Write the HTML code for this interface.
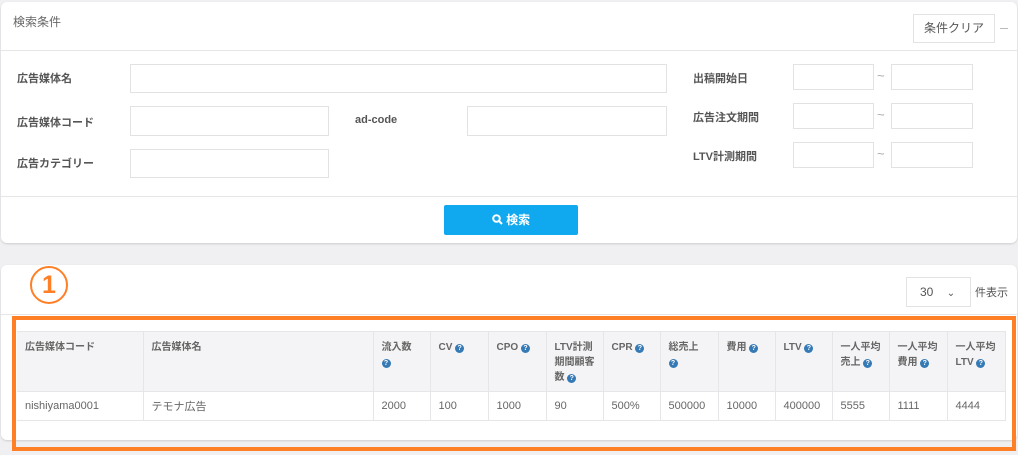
<!DOCTYPE html>
<html><head><meta charset="utf-8"><style>
*{box-sizing:border-box;margin:0;padding:0}
body{width:1018px;height:455px;background:#f0f0f2;font-family:"Liberation Sans","Noto Sans CJK JP",sans-serif;color:#555;position:relative;overflow:hidden;font-size:12px}
.a{position:absolute}
.panel{background:#fff;border-radius:6px;box-shadow:0 1px 2px rgba(0,0,0,.15)}
.inp{position:absolute;border:1px solid #e2e2e2;background:#fff}
.lbl{position:absolute;font-weight:bold;font-size:11px;color:#555}
.t{position:absolute;color:#aaa;font-size:13px}
.q{display:inline-block;width:9px;height:9px;border-radius:50%;background:#3579b5;color:#fff;font-size:7px;line-height:9px;text-align:center;font-weight:bold;vertical-align:0px}
table{border-collapse:collapse;position:absolute;left:17px;top:331px;width:988px;table-layout:fixed}
th{background:#f4f4f6;font-size:10px;font-weight:bold;text-align:left;vertical-align:top;padding:8px 8px 0;height:60px;line-height:15px;border-right:1px solid #e6e6e8;border-top:1px solid #e6e6e8;color:#666}
td{font-size:11px;padding:0 8px;height:29px;border:1px solid #e6e6e8;border-left:none;color:#666}
</style></head><body>
<div class="a panel" style="left:1px;top:2px;width:1016px;height:241px"></div>
<div class="a" style="left:13px;top:13px;font-size:12px;color:#666">検索条件</div>
<div class="a" style="left:913px;top:14px;width:82px;height:29px;border:1px solid #e2e2e2;font-size:12px;line-height:27px;text-align:center;color:#555">条件クリア</div>
<div class="a" style="left:1000px;top:28px;width:8px;height:1px;background:#bbb"></div>
<div class="a" style="left:1px;top:50px;width:1016px;height:1px;background:#e6e6e6"></div>
<div class="lbl" style="left:17px;top:70px">広告媒体名</div>
<div class="inp" style="left:130px;top:64px;width:537px;height:29px"></div>
<div class="lbl" style="left:17px;top:114px">広告媒体コード</div>
<div class="inp" style="left:130px;top:106px;width:199px;height:30px"></div>
<div class="lbl" style="left:355px;top:114px">ad-code</div>
<div class="inp" style="left:467px;top:106px;width:200px;height:30px"></div>
<div class="lbl" style="left:17px;top:155px">広告カテゴリー</div>
<div class="inp" style="left:130px;top:149px;width:199px;height:29px"></div>
<div class="lbl" style="left:693px;top:70px">出稿開始日</div>
<div class="lbl" style="left:693px;top:109px">広告注文期間</div>
<div class="lbl" style="left:693px;top:148px">LTV計測期間</div>
<div class="inp" style="left:793px;top:64px;width:81px;height:26px"></div><div class="t" style="left:877px;top:68px">~</div><div class="inp" style="left:891px;top:64px;width:82px;height:26px"></div>
<div class="inp" style="left:793px;top:103px;width:81px;height:26px"></div><div class="t" style="left:877px;top:107px">~</div><div class="inp" style="left:891px;top:103px;width:82px;height:26px"></div>
<div class="inp" style="left:793px;top:142px;width:81px;height:26px"></div><div class="t" style="left:877px;top:146px">~</div><div class="inp" style="left:891px;top:142px;width:82px;height:26px"></div>
<div class="a" style="left:1px;top:196px;width:1016px;height:1px;background:#e6e6e6"></div>
<div class="a" style="left:444px;top:205px;width:134px;height:30px;background:#10a8ee;border-radius:2px;color:#fff;font-size:12px;line-height:30px;text-align:center;font-weight:bold"><svg width="11" height="11" viewBox="0 0 11 11" style="vertical-align:-1px"><circle cx="4.5" cy="4.5" r="3.3" fill="none" stroke="#fff" stroke-width="2"/><path d="M7 7l3 3" stroke="#fff" stroke-width="2"/></svg> 検索</div>

<div class="a panel" style="left:1px;top:265px;width:1016px;height:175px"></div>
<div class="a" style="left:1px;top:314px;width:1016px;height:1px;background:#e6e6e6"></div>
<div class="a" style="left:30px;top:266px;width:38px;height:38px;border:2px solid #ff7f27;border-radius:50%;color:#ff7f27;font-size:25px;font-weight:bold;line-height:34px;text-align:center">1</div>
<div class="a" style="left:906px;top:277px;width:65px;height:30px;border:1px solid #e2e2e2;font-size:12px;line-height:28px;padding-left:13px;color:#555">30 <span style="margin-left:10px;font-size:10px">&#8964;</span></div>
<div class="a" style="left:975px;top:284px;font-size:11px;color:#555">件表示</div>
<table>
<colgroup><col style="width:126px"><col style="width:230px"><col style="width:57px"><col style="width:58px"><col style="width:58px"><col style="width:57px"><col style="width:57px"><col style="width:58px"><col style="width:57px"><col style="width:57px"><col style="width:57px"><col style="width:58px"><col style="width:58px"></colgroup>
<tr><th>広告媒体コード</th><th>広告媒体名</th><th>流入数<br><span class="q">?</span></th><th>CV <span class="q">?</span></th><th>CPO <span class="q">?</span></th><th>LTV計測期間顧客数 <span class="q">?</span></th><th>CPR <span class="q">?</span></th><th>総売上<br><span class="q">?</span></th><th>費用 <span class="q">?</span></th><th>LTV <span class="q">?</span></th><th>一人平均売上 <span class="q">?</span></th><th>一人平均費用 <span class="q">?</span></th><th>一人平均LTV <span class="q">?</span></th></tr>
<tr><td>nishiyama0001</td><td>テモナ広告</td><td>2000</td><td>100</td><td>1000</td><td>90</td><td>500%</td><td>500000</td><td>10000</td><td>400000</td><td>5555</td><td>1111</td><td>4444</td></tr>
</table>
<div class="a" style="left:12px;top:316px;width:1004px;height:135px;border:4px solid #ff7f27"></div>
</body></html>
